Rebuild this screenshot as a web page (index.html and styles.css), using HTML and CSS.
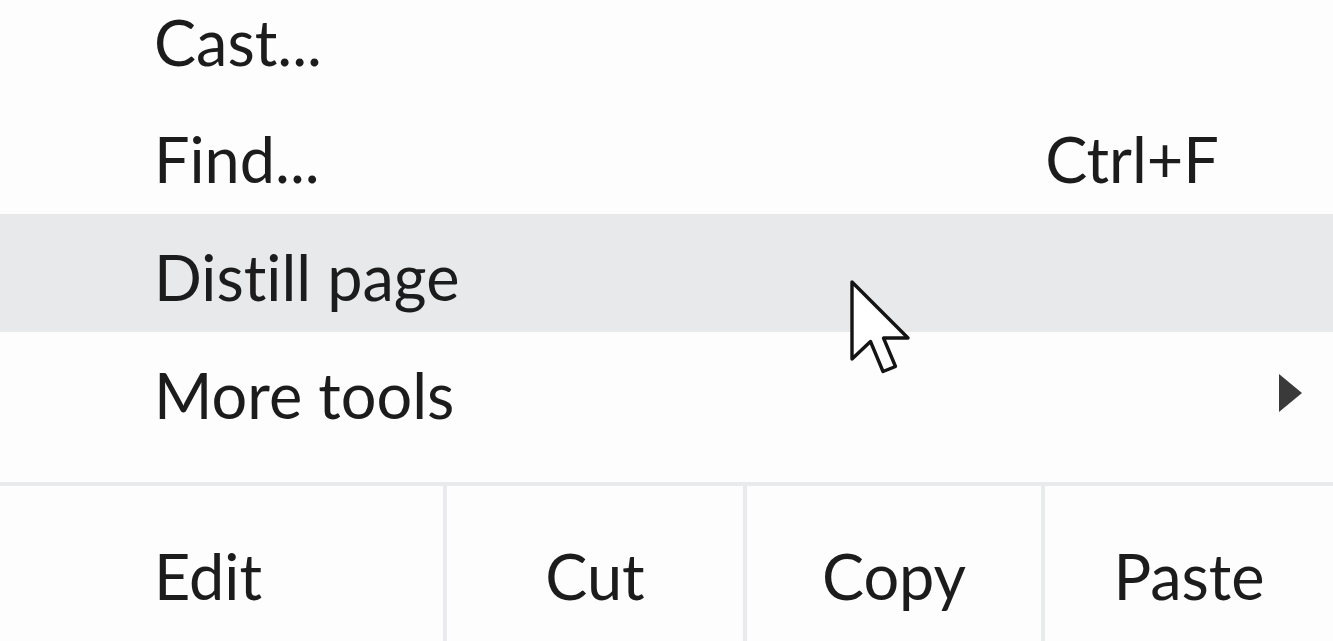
FILE: index.html
```html
<!DOCTYPE html>
<html lang="en">
<head>
    <meta charset="UTF-8">
    <meta name="viewport" content="width=device-width, initial-scale=1.0">
    <title>Menu</title>
    <link rel="stylesheet" href="styles.css">
</head>
<body>
    <div class="menu">
        <div class="item top">
            <span class="label">Cast...</span>
        </div>
        <div class="item">
            <span class="label">Find...</span>
            <span class="shortcut">Ctrl+F</span>
        </div>
        <div class="item active">
            <span class="label">Distill page</span>
        </div>
        <div class="item">
            <span class="label">More tools</span>
            <svg class="submenu-arrow" viewBox="0 0 26 42" width="26" height="42">
                <polygon points="2,2 25,21 2,40" fill="#3a3a3a"/>
            </svg>
        </div>

        <div class="separator"></div>

        <div class="edit-row">
            <div class="edit-cell first">Edit</div>
            <div class="edit-cell">Cut</div>
            <div class="edit-cell">Copy</div>
            <div class="edit-cell">Paste</div>
        </div>
    </div>

    <!-- mouse pointer over the highlighted row -->
    <svg class="pointer" viewBox="0 0 13 21" width="65" height="105">
        <path d="M1 1 V16.4 L4.7 12.9 L7.2 18.9 L9.7 17.9 L7.3 12.2 L12.2 12.2 Z"
              fill="#fff" stroke="#141414" stroke-width="0.68" stroke-linejoin="round"/>
    </svg>
</body>
</html>
```

FILE: styles.css
```css
* {
    margin: 0;
    padding: 0;
    box-sizing: border-box;
}

body {
    background: #fdfdfe;
    font-family: Lato, "Open Sans", Arial, sans-serif;
    font-variant-ligatures: none;
    color: #1c1c1c;
    overflow: hidden;
    height: 100vh;
}

.menu {
    font-size: 63px;
}

.item {
    display: flex;
    height: 118px;
    padding: 0 30px 0 154px;
}

.item.top {
    height: 96px;
}

.item.active {
    background: #e8e9eb;
}

.label,
.shortcut {
    padding-top: 7px;
    line-height: 111px;
    white-space: nowrap;
}

.item.top .label {
    padding-top: 0;
    line-height: 84px;
}

.shortcut {
    margin-left: auto;
    margin-right: 84px;
}

.submenu-arrow {
    margin-left: auto;
    align-self: center;
    margin-top: 4px;
}

.separator {
    padding-top: 32px;
    border-bottom: 4px solid #e9eaec;
}

.edit-row {
    display: grid;
    grid-template-columns: 443px 300px 298px 1fr;
    height: 154px;
}

.edit-cell {
    padding-top: 7px;
    line-height: 165px;
    text-align: center;
    border-left: 4px solid #e9eaec;
}

.edit-cell.first {
    text-align: left;
    padding-left: 154px;
    border-left: none;
}

.pointer {
    position: absolute;
    left: 847px;
    top: 277px;
}
```
